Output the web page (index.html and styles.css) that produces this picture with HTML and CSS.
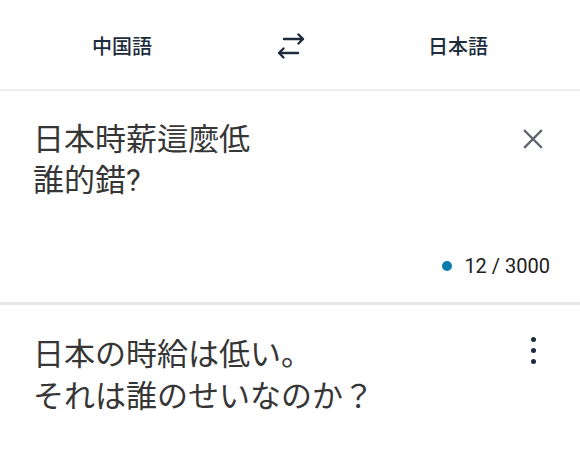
FILE: index.html
```html
<!DOCTYPE html>
<html lang="ja">
<head>
<meta charset="utf-8">
<link rel="stylesheet" href="styles.css">
</head>
<body>
<div class="app">
  <header class="langbar">
    <div class="lang">中国語</div>
    <div class="swap">
      <svg width="28" height="28" viewBox="0 0 28 28" fill="none" stroke="currentColor" stroke-width="2.4" stroke-linecap="round" stroke-linejoin="round">
        <path d="M7 7h19M21.5 2.5 26 7l-4.5 4.5"/>
        <path d="M21 21H2M6.5 16.5 2 21l4.5 4.5"/>
      </svg>
    </div>
    <div class="lang">日本語</div>
  </header>
  <section class="source">
    <div class="row">
      <div class="src-text">日本時薪這麼低<br>誰的錯?</div>
      <div class="iconcol">
        <svg width="20" height="20" viewBox="0 0 20 20" stroke="#5f6670" stroke-width="2.4" stroke-linecap="square"><path d="M2 2 18 18M18 2 2 18"/></svg>
      </div>
    </div>
    <div class="counter"><span class="dot"></span><span>12 / 3000</span></div>
  </section>
  <section class="target">
    <div class="row">
      <div class="tgt-text">日本の時給は低い。<br>それは誰のせいなのか？</div>
      <div class="iconcol kebab">
        <span></span><span></span><span></span>
      </div>
    </div>
  </section>
</div>
</body>
</html>
```
FILE: styles.css
```css
* { box-sizing: border-box; }
html, body { margin: 0; padding: 0; background: #fff; }
body { width: 580px; height: 455px; overflow: hidden; font-family: Roboto, "Noto Sans CJK JP", sans-serif; }

.langbar {
  display: grid;
  grid-template-columns: 1fr 92px 1fr;
  align-items: center;
  height: 91px;
  border-bottom: 2px solid #ececec;
  color: #1d2c3c;
}
.lang {
  text-align: center;
  font-family: Roboto, "Noto Sans CJK JP", sans-serif;
  font-size: 20px;
  font-weight: 500;
  padding-top: 1px;
}
.swap { display: flex; justify-content: center; align-items: center; padding-left: 2px; padding-top: 2px; }

.source {
  height: 214px;
  display: flex;
  flex-direction: column;
  padding: 28px 27px 24px 33px;
  border-bottom: 3px solid #e8e8e8;
}
.row { display: flex; align-items: flex-start; }
.src-text, .tgt-text {
  flex: 1;
  font-size: 31px;
  line-height: 41px;
  color: #363636;
}
.src-text { font-family: Roboto, "Noto Sans CJK TC", sans-serif; }
.tgt-text { font-family: Roboto, "Noto Sans CJK JP", sans-serif; line-height: 42px; }
.iconcol {
  width: 40px;
  height: 40px;
  display: flex;
  align-items: center;
  justify-content: center;
}
.source .row { flex: 1; }
.counter {
  display: flex;
  align-items: center;
  justify-content: flex-end;
  gap: 12px;
  padding-right: 3px;
  height: 24px;
  font-size: 20px;
  color: #202020;
}
.dot { width: 10px; height: 10px; border-radius: 50%; background: #0b7bad; }

.target { padding: 29px 27px 0 33px; }
.kebab { flex-direction: column; gap: 6px; justify-content: flex-start; padding-top: 3px; }
.kebab span { width: 5px; height: 5px; border-radius: 50%; background: #1d2c3c; }
```
